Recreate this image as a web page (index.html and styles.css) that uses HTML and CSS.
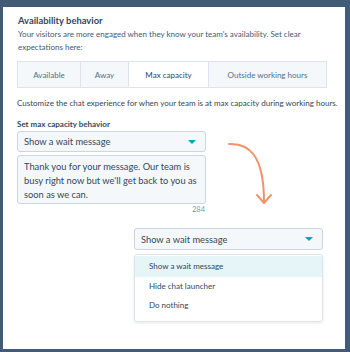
FILE: index.html
```html
<!DOCTYPE html>
<html>
<head>
<meta charset="utf-8">
<link rel="stylesheet" href="styles.css">
</head>
<body>
<div class="panel">
  <h2 class="title">Availability behavior</h2>
  <p class="desc">Your visitors are more engaged when they know your team's availability. Set clear expectations here:</p>
  <div class="tabs">
    <div class="tab t1">Available</div>
    <div class="tab t2">Away</div>
    <div class="tab t3 active">Max capacity</div>
    <div class="tab t4">Outside working hours</div>
  </div>
  <p class="desc2">Customize the chat experience for when your team is at max capacity during working hours.</p>
  <div class="label">Set max capacity behavior</div>
  <div class="row">
    <div class="left">
      <div class="select"><span>Show a wait message</span><span class="caret"></span></div>
      <div class="textarea">Thank you for your message. Our team is busy right now but we'll get back to you as soon as we can.</div>
      <div class="count">284</div>
    </div>
    <svg class="arrow" width="60" height="70" viewBox="0 0 60 70">
      <path d="M 5 4 C 25 3, 40 15, 40 62" fill="none" stroke="#f0936a" stroke-width="2" stroke-linecap="round"/>
      <path d="M 33 55 L 40 63 L 47 55" fill="none" stroke="#f0936a" stroke-width="2" stroke-linecap="round" stroke-linejoin="round"/>
    </svg>
  </div>
  <div class="open">
    <div class="select big"><span>Show a wait message</span><span class="caret"></span></div>
    <ul class="menu">
      <li class="hl">Show a wait message</li>
      <li>Hide chat launcher</li>
      <li>Do nothing</li>
    </ul>
  </div>
</div>
</body>
</html>
```

FILE: styles.css
```css
html, body { margin: 0; padding: 0; }
body {
  background: #425b76;
  width: 350px;
  height: 352px;
  overflow: hidden;
  font-family: Lato, "Open Sans", sans-serif;
  color: #33475b;
}
.panel {
  box-sizing: border-box;
  margin: 7px 5px 0 3px;
  height: 342px;
  background: #fff;
  padding: 7px 0 0 14px;
}
.title {
  margin: 0 0 0 1px;
  font-size: 9.4px;
  font-weight: 700;
  line-height: 14px;
}
.desc {
  margin: 0 0 0 1px;
  font-size: 8px;
  line-height: 13px;
  width: 300px;
  color: #425b76;
}
.tabs {
  display: flex;
  margin-top: 7px;
  width: 310px;
  height: 27px;
  box-sizing: border-box;
  border: 1px solid #dfe3eb;
}
.tab {
  display: flex;
  align-items: center;
  justify-content: center;
  background: #f5f8fa;
  font-size: 8px;
  color: #516f90;
  border-right: 1px solid #dfe3eb;
}
.tab:last-child { border-right: none; }
.tab.active { background: #fff; color: #33475b; }
.t1 { width: 62px; }
.t2 { width: 47px; }
.t3 { width: 79px; }
.t4 { flex: 1; }
.desc2 {
  margin: 9px 0 0 0;
  font-size: 8px;
  line-height: 13px;
  color: #33475b;
}
.label {
  margin-top: 8px;
  font-size: 8px;
  font-weight: 700;
  line-height: 13px;
}
.row {
  display: flex;
  margin-top: 0;
}
.left { width: 189px; }
.select {
  box-sizing: border-box;
  height: 21px;
  border: 1px solid #cbd6e2;
  border-radius: 3px;
  background: #f5f8fa;
  display: flex;
  align-items: center;
  justify-content: space-between;
  padding: 0 9px 0 6px;
  font-size: 9.3px;
  color: #33475b;
}
.caret {
  width: 0;
  height: 0;
  border-left: 4px solid transparent;
  border-right: 4px solid transparent;
  border-top: 4px solid #00a4bd;
}
.textarea {
  box-sizing: border-box;
  margin-top: 3px;
  height: 49px;
  border: 1px solid #cbd6e2;
  border-radius: 3px;
  background: #f5f8fa;
  padding: 4px 3px 4px 6px;
  font-size: 9.3px;
  line-height: 14px;
  color: #33475b;
}
.count {
  text-align: right;
  font-size: 7.5px;
  color: #7c98b6;
  margin-top: 1px;
  padding-right: 1px;
}
.arrow { margin: 9px 0 0 18px; }
.open {
  margin: 14px 0 0 117px;
  width: 189px;
}
.select.big { height: 22px; }
.menu {
  list-style: none;
  margin: 4px 0 0 0;
  padding: 1px 0 6px 0;
  border: 1px solid #dfe3eb;
  border-radius: 3px;
  box-shadow: 0 1px 3px rgba(45, 62, 80, 0.12);
}
.menu li {
  height: 19px;
  line-height: 19px;
  padding-left: 14px;
  font-size: 8px;
  color: #33475b;
}
.menu li.hl { background: #e5f5f8; height: 21px; line-height: 21px; }
```
